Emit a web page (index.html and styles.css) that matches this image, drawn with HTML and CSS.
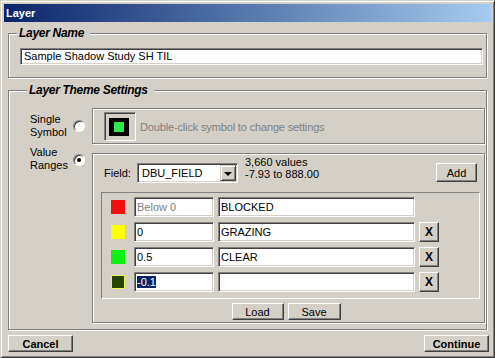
FILE: index.html
```html
<!DOCTYPE html>
<html lang="en">
<head>
    <meta charset="UTF-8">
    <meta name="viewport" content="width=device-width, initial-scale=1.0">
    <title>Layer</title>
    <link rel="stylesheet" href="styles.css">
</head>
<body>

    <div class="window">
        <div class="titlebar">Layer</div>

        <fieldset class="group name-group">
            <legend>Layer Name</legend>
            <div class="edit name-edit">Sample Shadow Study SH TIL</div>
        </fieldset>

        <fieldset class="group theme-group">
            <legend>Layer Theme Settings</legend>

            <div class="choice single">
                <div class="choice-label">Single<br>Symbol</div>
                <span class="radio"></span>
                <div class="panel symbol-panel">
                    <div class="symbol-btn"><span class="symbol"></span></div>
                    <span class="hint">Double-click symbol to change settings</span>
                </div>
            </div>

            <div class="choice ranges">
                <div class="choice-label">Value<br>Ranges</div>
                <span class="radio checked"></span>
                <div class="panel ranges-panel">
                    <div class="field-row">
                        <span class="field-label">Field:</span>
                        <div class="combo">
                            <span class="combo-text">DBU_FIELD</span>
                            <span class="combo-btn"><span class="arrow"></span></span>
                        </div>
                        <div class="stats">3,660 values<br>-7.93 to 888.00</div>
                        <div class="btn add-btn">Add</div>
                    </div>

                    <div class="range-list">
                        <div class="range-row">
                            <span class="swatch red"></span>
                            <div class="edit value-edit disabled">Below 0</div>
                            <div class="edit label-edit">BLOCKED</div>
                        </div>
                        <div class="range-row">
                            <span class="swatch yellow"></span>
                            <div class="edit value-edit">0</div>
                            <div class="edit label-edit">GRAZING</div>
                            <div class="btn del-btn">X</div>
                        </div>
                        <div class="range-row">
                            <span class="swatch green"></span>
                            <div class="edit value-edit">0.5</div>
                            <div class="edit label-edit">CLEAR</div>
                            <div class="btn del-btn">X</div>
                        </div>
                        <div class="range-row">
                            <span class="swatch olive"></span>
                            <div class="edit value-edit"><span class="selected">-0.1</span></div>
                            <div class="edit label-edit"></div>
                            <div class="btn del-btn">X</div>
                        </div>
                    </div>

                    <div class="file-row">
                        <div class="btn load-btn">Load</div>
                        <div class="btn save-btn">Save</div>
                    </div>
                </div>
            </div>
        </fieldset>

        <div class="footer">
            <div class="btn footer-btn">Cancel</div>
            <div class="btn footer-btn">Continue</div>
        </div>
    </div>

</body>
</html>
```

FILE: styles.css
```css
body {
    margin: 0;
    font-family: 'Liberation Sans', Arial, sans-serif;
    font-size: 11px;
    color: #000;
    background-color: #d4d0c8;
}

.window {
    width: 495px;
    height: 358px;
    box-sizing: border-box;
    border: 1px solid;
    border-color: #d4d0c8 #404040 #404040 #d4d0c8;
    box-shadow: inset 1px 1px #fff, inset -1px -1px #808080;
    padding: 3px;
    display: flex;
    flex-direction: column;
}

.titlebar {
    height: 18px;
    line-height: 18px;
    padding-left: 2px;
    color: #fff;
    font-weight: bold;
    font-size: 11px;
    background: linear-gradient(to right, #0a246a, #a6caf0);
}

/* etched group boxes */
.group {
    margin: 4px 4px 0;
    border: 1px solid #808080;
    box-shadow: inset 1px 1px #fff, 1px 1px #fff;
    min-width: 0;
}

.group legend {
    font-size: 12px;
    line-height: 14px;
    font-weight: bold;
    font-style: italic;
    letter-spacing: -0.3px;
    padding: 0 6px 0 2px;
    margin-left: -3px;
    background-color: #d4d0c8;
}

.name-group {
    padding: 8px 3px 12px 11px;
}

.theme-group {
    margin-top: 5px;
    padding: 11px 1px 6px 21px;
}

/* sunken edit box */
.edit {
    box-sizing: border-box;
    background-color: #fff;
    border: 1px solid;
    border-color: #808080 #fff #fff #808080;
    box-shadow: inset 1px 1px #404040, inset -1px -1px #d4d0c8;
    padding: 0 3px;
    white-space: nowrap;
    overflow: hidden;
}

.name-edit {
    height: 17px;
    line-height: 15px;
}

.btn {
    box-sizing: border-box;
    border: 1px solid;
    border-color: #fff #404040 #404040 #fff;
    box-shadow: inset -1px -1px #808080;
    background-color: #d4d0c8;
    display: flex;
    align-items: center;
    justify-content: center;
}

.choice {
    display: flex;
}

.choice.single {
    align-items: center;
}

.choice.ranges {
    align-items: flex-start;
    margin-top: 9px;
}

.choice-label {
    width: 43px;
    line-height: 13px;
}

.ranges .choice-label {
    margin-top: -7px;
}

.radio {
    width: 12px;
    height: 12px;
    box-sizing: border-box;
    border-radius: 50%;
    border: 1px solid;
    border-color: #808080 #fff #fff #808080;
    box-shadow: inset 1px 1px #404040;
    background-color: #fff;
    margin-right: 7px;
    display: flex;
    align-items: center;
    justify-content: center;
}

.ranges .radio {
    margin-top: 1px;
}

.radio.checked::after {
    content: "";
    width: 4px;
    height: 4px;
    border-radius: 50%;
    background-color: #000;
}

.panel {
    flex: 1;
    box-sizing: border-box;
    border: 1px solid #808080;
    box-shadow: inset 1px 1px #fff, 1px 1px #fff;
}

.symbol-panel {
    height: 36px;
    display: flex;
    align-items: center;
    padding-left: 11px;
}

.symbol-btn {
    width: 32px;
    height: 29px;
    box-sizing: border-box;
    border: 1px solid;
    border-color: #808080 #fff #fff #808080;
    box-shadow: inset 1px 1px #404040;
    display: flex;
    align-items: center;
    justify-content: center;
    margin-right: 4px;
}

.symbol {
    width: 20px;
    height: 18px;
    box-sizing: border-box;
    border: 4px solid #000;
    border-left-width: 5px;
    border-right-width: 5px;
    background-color: #2ee84d;
    margin: 1px 3px 0 0;
}

.hint {
    color: #808080;
    margin-top: 1px;
    letter-spacing: -0.15px;
}

.ranges-panel {
    padding: 9px 4px 2px 8px;
}

.field-row {
    display: flex;
    align-items: flex-start;
    padding: 0 3px;
    height: 20px;
}

.field-label {
    line-height: 20px;
    width: 33px;
}

.combo {
    width: 101px;
    height: 20px;
    box-sizing: border-box;
    background-color: #fff;
    border: 1px solid;
    border-color: #808080 #fff #fff #808080;
    box-shadow: inset 1px 1px #404040, inset -1px -1px #d4d0c8;
    display: flex;
    padding: 1px;
}

.combo-text {
    flex: 1;
    line-height: 16px;
    padding-left: 3px;
}

.combo-btn {
    width: 16px;
    height: 16px;
    box-sizing: border-box;
    border: 1px solid;
    border-color: #d4d0c8 #404040 #404040 #d4d0c8;
    box-shadow: inset 1px 1px #fff, inset -1px -1px #808080;
    background-color: #d4d0c8;
    display: flex;
    align-items: center;
    justify-content: center;
}

.arrow {
    width: 0;
    height: 0;
    border-left: 4px solid transparent;
    border-right: 4px solid transparent;
    border-top: 4px solid #000;
    margin-top: 1px;
}

.stats {
    margin: -7px 0 0 7px;
    line-height: 12px;
}

.add-btn {
    margin-left: auto;
    width: 41px;
    height: 19px;
}

.range-list {
    margin-top: 9px;
    border: 1px solid;
    border-color: #808080 #fff #fff #808080;
    padding: 4px 0 6px 9px;
    display: flex;
    flex-direction: column;
    gap: 5px;
}

.range-row {
    display: flex;
    align-items: center;
    height: 20px;
}

.swatch {
    width: 14px;
    height: 14px;
    box-sizing: border-box;
    margin-right: 9px;
}

.swatch.red { background-color: #f01010; }
.swatch.yellow { background-color: #ffff00; }
.swatch.green { background-color: #10f010; }
.swatch.olive {
    background-color: #264600;
    border: 1px solid #f0f060;
}

.range-row .edit {
    height: 20px;
    line-height: 18px;
    padding-left: 2px;
}

.value-edit {
    width: 80px;
    margin-right: 4px;
}

.label-edit {
    width: 197px;
    margin-right: 4px;
}

.disabled {
    color: #808080;
}

.selected {
    background-color: #0a246a;
    color: #fff;
}

.del-btn {
    width: 20px;
    height: 20px;
    font-size: 12px;
    font-weight: bold;
}

.file-row {
    display: flex;
    justify-content: center;
    gap: 4px;
    margin-top: 4px;
    padding-right: 9px;
}

.load-btn,
.save-btn {
    height: 17px;
}

.load-btn { width: 52px; }
.save-btn { width: 53px; }

.footer {
    display: flex;
    justify-content: space-between;
    margin-top: 5px;
    padding: 0 2px 0 4px;
}

.footer-btn {
    width: 65px;
    height: 17px;
    font-weight: bold;
}
```
